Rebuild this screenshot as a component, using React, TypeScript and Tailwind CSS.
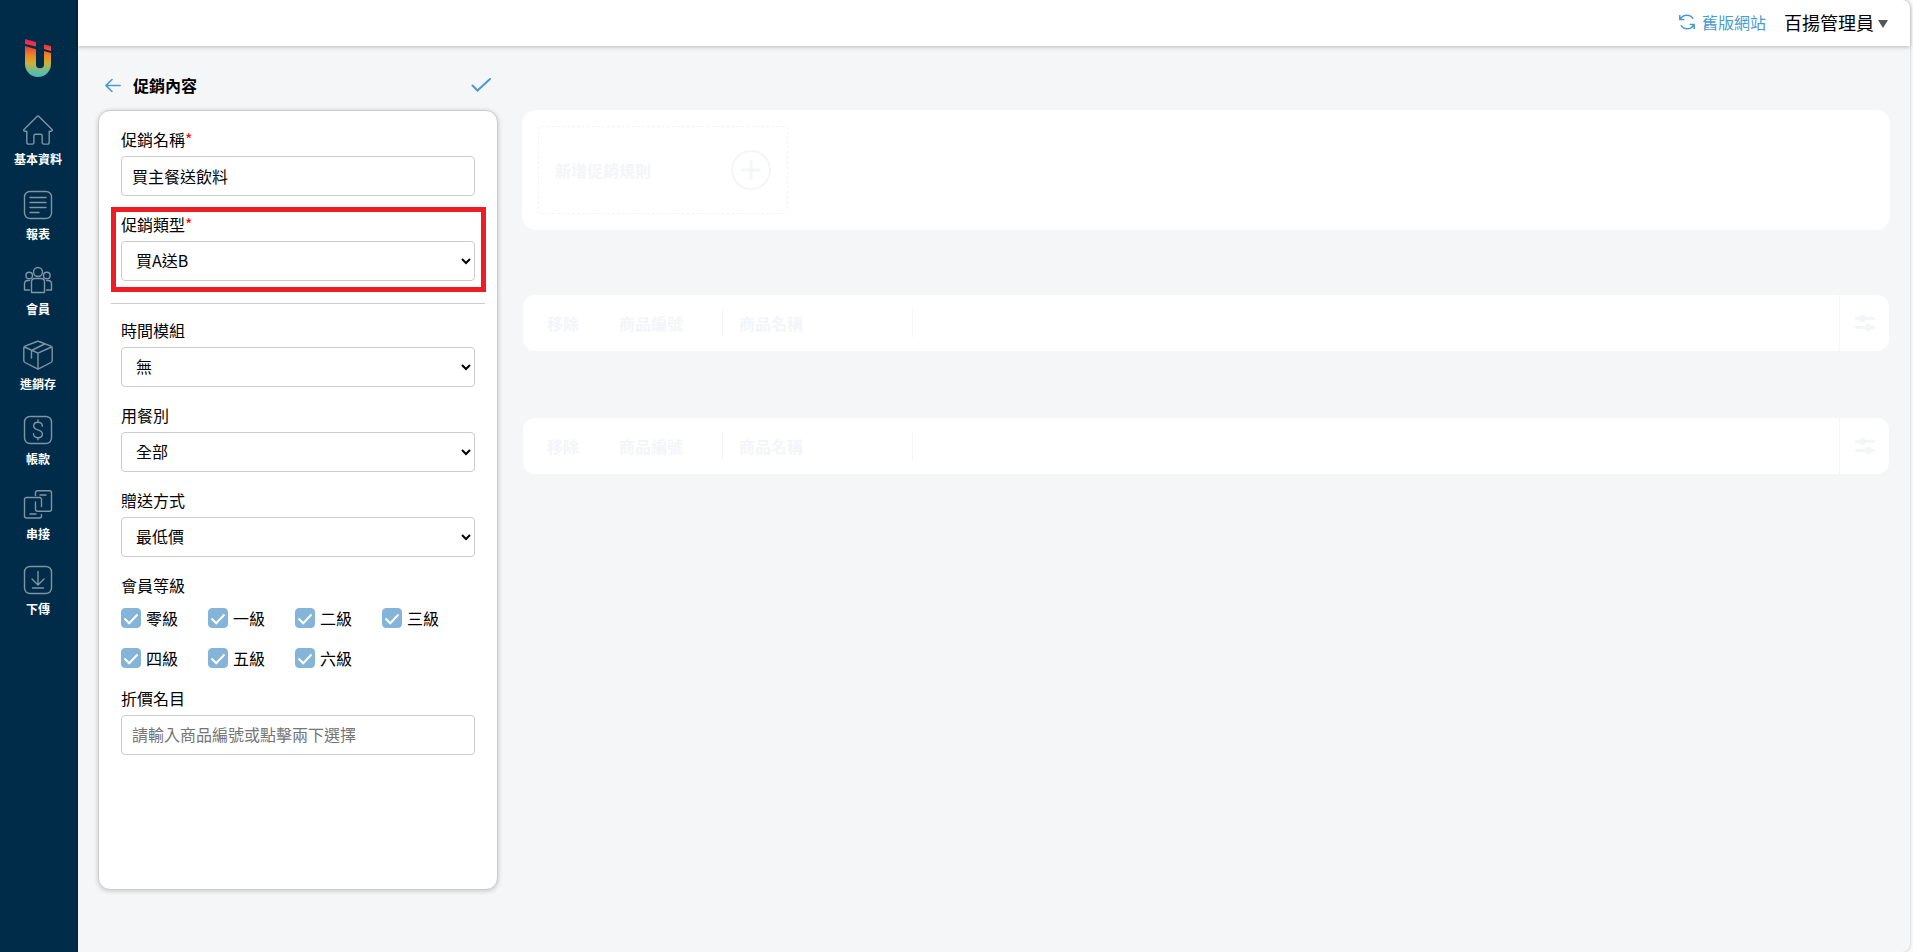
import type { ReactNode } from 'react';

type NavItem = {
  label: string;
  icon: ReactNode;
};

type SelectFieldProps = {
  id: string;
  label: string;
  options: string[];
  required?: boolean;
  highlighted?: boolean;
};

const navItems: NavItem[] = [
  {
    label: '基本資料',
    icon: (
      <path d="M16.2 1.7 29 14.5c.6.6.3 1.8-.7 1.8h-2.1v10.9c0 1.1-.8 1.9-1.9 1.9h-3.4c-1 0-1.7-.7-1.7-1.7v-6.5c0-1-.7-1.7-1.7-1.7h-4.9c-1 0-1.7.7-1.7 1.7v6.5c0 1-.7 1.7-1.7 1.7H5.7c-1.1 0-1.9-.8-1.9-1.9V16.3H1.7c-1 0-1.3-1.2-.7-1.8L13.8 1.7c.7-.7 1.7-.7 2.4 0z" />
    ),
  },
  {
    label: '報表',
    icon: (
      <>
        <rect x="1.5" y="1.5" width="27" height="27" rx="5.5" />
        <path d="M7 7.5h16M7 12.5h16M7 17.5h16M7 22.5h9" />
      </>
    ),
  },
  {
    label: '會員',
    icon: (
      <>
        <circle cx="15" cy="7" r="4.5" />
        <circle cx="6.2" cy="10.5" r="3.3" />
        <circle cx="23.8" cy="10.5" r="3.3" />
        <path d="M8.5 27.5V17c0-2 1.5-3.5 3.5-3.5h6c2 0 3.5 1.5 3.5 3.5v10.5z" />
        <path d="M6.5 15.5H5c-2 0-3.5 1.5-3.5 3.5v6h5M23.5 15.5H25c2 0 3.5 1.5 3.5 3.5v6h-5" />
      </>
    ),
  },
  {
    label: '進銷存',
    icon: (
      <>
        <path d="M14 1.5a2.5 2.5 0 0 1 2 0l12 4.7c.8.4 1.2 1 1.2 1.8v12.5c0 .9-.5 1.6-1.2 2L16 28.7c-.6.3-1.4.3-2 0L2 22.5c-.8-.4-1.2-1.1-1.2-2V8c0-.8.4-1.4 1.2-1.8z" />
        <path d="m1.5 7 13.5 6.2L28.5 7M15 13.2V29M8.5 18v-7.5L21.5 4" />
      </>
    ),
  },
  {
    label: '帳款',
    icon: (
      <>
        <rect x="1.5" y="1.5" width="27" height="27" rx="5.5" />
        <path d="M19.3 11.3c0-2.3-1.8-4-4.3-4s-4.3 1.5-4.3 3.6c0 2.3 1.6 3.1 4.3 4s4.4 1.8 4.4 4.2c0 2.2-1.8 3.7-4.4 3.7s-4.5-1.6-4.5-4M15 5v2.3M15 22.8v2" />
      </>
    ),
  },
  {
    label: '串接',
    icon: (
      <>
        <path d="M12.5 5.5V2.7c0-1.2.8-2 2-2h12c1.2 0 2 .8 2 2v16.5c0 1.2-.8 2-2 2h-12c-1.2 0-2-.8-2-2V12" />
        <path d="M18.5 16.5v-7c0-1.2-.8-2-2-2h-13c-1.2 0-2 .8-2 2V26c0 1.2.8 2 2 2h13c1.2 0 2-.8 2-2v-1.5M17 5h6M7 24h6" />
      </>
    ),
  },
  {
    label: '下傳',
    icon: (
      <>
        <rect x="1.5" y="1.5" width="27" height="27" rx="5.5" />
        <path d="M15 6.5V20M9 14l6 6 6-6M9.500 23h11" />
      </>
    ),
  },
];

const levels = ['零級', '一級', '二級', '三級', '四級', '五級', '六級'];

function Logo() {
  return (
    <svg viewBox="0 0 26 38" className="h-[38px] w-[26px]" aria-hidden="true">
      <defs>
        <linearGradient id="logo" x1="0" y1="0" x2="0" y2="1">
          <stop offset="0" stopColor="#ec1c62" />
          <stop offset="0.2" stopColor="#ee3d3a" />
          <stop offset="0.45" stopColor="#f08a24" />
          <stop offset="0.65" stopColor="#c9b23e" />
          <stop offset="0.85" stopColor="#66bd9c" />
          <stop offset="1" stopColor="#4fb8bd" />
        </linearGradient>
      </defs>
      <path
        fill="url(#logo)"
        d="M0 0l11 3v4.500L0 5zM19 5.500l7 1.500v5l-7-2zM0 7l11 3.200v15.300a4 3.800 0 0 0 8 0V12l7 2V25a13 13 0 0 1-26 0z"
      />
    </svg>
  );
}

function Sidebar() {
  return (
    <nav className="flex w-[78px] shrink-0 flex-col items-center bg-[#002b49] pt-[39px] pr-0.5">
      <Logo />
      <ul className="mt-[38px] flex flex-col gap-[15px]">
        {navItems.map((item) => (
          <li key={item.label}>
            <a
              href="#"
              className="flex h-[60px] flex-col items-center gap-1.5 text-xs font-bold whitespace-nowrap text-white"
            >
              <svg
                viewBox="0 0 30 30"
                className="size-[30px] shrink-0 fill-none stroke-[#7f95a4]"
                strokeWidth="1.4"
                strokeLinecap="round"
                strokeLinejoin="round"
                aria-hidden="true"
              >
                {item.icon}
              </svg>
              {item.label}
            </a>
          </li>
        ))}
      </ul>
    </nav>
  );
}

function Header() {
  return (
    <header className="flex h-[46px] shrink-0 items-center justify-end rounded-tr-lg bg-white pr-[22px] pb-0.5 shadow-[0_1px_4px_rgba(0,0,0,0.25)]">
      <a href="#" className="flex items-center gap-[7px] text-[#4a9bcf]">
        <svg
          viewBox="0 0 16 16"
          className="size-4 fill-none stroke-current"
          strokeWidth="1.5"
          aria-hidden="true"
        >
          <path d="M.8 1v4.5h4.5M1.2 5.2C2.8 2.200 5.200 1.200 8 1.200c2.700 0 4.800 1.300 6 3.600M15.200 15v-4.500h-4.500M14.800 10.800C13.200 13.800 10.800 14.800 8 14.800c-2.700 0-4.800-1.300-6-3.600" />
        </svg>
        舊版網站
      </a>
      <button
        type="button"
        className="ml-[18px] flex items-center gap-1 text-lg text-black"
      >
        百揚管理員
        <svg
          viewBox="0 0 10 8"
          className="mt-1 h-2 w-2.5 fill-[#555]"
          aria-hidden="true"
        >
          <path d="M0 0h10L5 8z" />
        </svg>
      </button>
    </header>
  );
}

function FieldLabel({
  id,
  label,
  required,
}: {
  id: string;
  label: string;
  required?: boolean;
}) {
  return (
    <label htmlFor={id} className="mb-[5px] block leading-6">
      {label}
      {required && <span className="text-[#f00]">*</span>}
    </label>
  );
}

function SelectField({
  id,
  label,
  options,
  required,
  highlighted,
}: SelectFieldProps) {
  return (
    <div className="relative">
      <FieldLabel id={id} label={label} required={required} />
      <select
        id={id}
        className="block h-10 w-full rounded border border-[#ccc] bg-white px-2.5 pb-0.5"
      >
        {options.map((option) => (
          <option key={option}>{option}</option>
        ))}
      </select>
      {highlighted && (
        <div className="pointer-events-none absolute -top-[5px] -right-[11px] -bottom-[11px] -left-2.5 border-5 border-[#ee1c25]" />
      )}
    </div>
  );
}

function PromotionForm() {
  return (
    <form className="w-[400px] shrink-0">
      <div className="mb-[13px] flex h-6 items-center px-[7px]">
        <button type="button" aria-label="返回" className="text-[#4a9bcf]">
          <svg
            viewBox="0 0 16 14"
            className="h-3.5 w-4 fill-none stroke-current"
            strokeWidth="1.6"
            strokeLinecap="round"
          >
            <path d="M15.2 7.5H1M7 1.5l-6 6 6 6" />
          </svg>
        </button>
        <h1 className="ml-3 font-bold">促銷內容</h1>
        <button
          type="submit"
          aria-label="儲存"
          className="ml-auto text-[#4a9bcf]"
        >
          <svg
            viewBox="0 0 20 14"
            className="h-3.5 w-5 fill-none stroke-current"
            strokeWidth="2"
            strokeLinecap="round"
          >
            <path d="m1.5 7.5 5 5L19 1" />
          </svg>
        </button>
      </div>

      <div className="min-h-[780px] rounded-xl border border-[#ccc] bg-white px-[22px] pt-4 shadow-[0_1px_5px_rgba(0,0,0,0.2)]">
        <div className="flex flex-col gap-4">
          <div>
            <FieldLabel id="name" label="促銷名稱" required />
            <input
              id="name"
              type="text"
              defaultValue="買主餐送飲料"
              className="block h-10 w-full rounded border border-[#ccc] px-2.5"
            />
          </div>
          <SelectField
            id="type"
            label="促銷類型"
            options={['買A送B']}
            required
            highlighted
          />
        </div>
        <hr className="-mx-2.5 mt-[22px] mb-3.5 border-[#ccc]" />
        <div className="flex flex-col gap-4">
          <SelectField id="time" label="時間模組" options={['無']} />
          <SelectField id="meal" label="用餐別" options={['全部']} />
          <SelectField id="gift" label="贈送方式" options={['最低價']} />
          <fieldset>
            <legend className="mb-[11px] leading-6">會員等級</legend>
            <div className="mb-0.5 grid grid-cols-[repeat(4,87px)] gap-y-5">
              {levels.map((level) => (
                <label
                  key={level}
                  className="flex h-5 items-center gap-[5px] whitespace-nowrap"
                >
                  <span className="relative size-5">
                    <input
                      type="checkbox"
                      defaultChecked
                      className="peer block size-5 appearance-none rounded border border-[#84b4d8] checked:bg-[#84b4d8]"
                    />
                    <svg
                      viewBox="0 0 20 20"
                      className="pointer-events-none absolute inset-0 hidden size-5 fill-none stroke-white peer-checked:block"
                      strokeWidth="2"
                      aria-hidden="true"
                    >
                      <path d="m3.5 10.5 4.7 4.7 8.300-8.700" />
                    </svg>
                  </span>
                  {level}
                </label>
              ))}
            </div>
          </fieldset>
          <div>
            <FieldLabel id="discount" label="折價名目" />
            <input
              id="discount"
              type="text"
              placeholder="請輸入商品編號或點擊兩下選擇"
              className="block h-10 w-full rounded border border-[#ccc] px-2.5 pb-0.5 placeholder:text-[#757575]"
            />
          </div>
        </div>
      </div>
    </form>
  );
}

function ProductTable() {
  return (
    <table className="w-full table-fixed rounded-xl bg-white text-left text-[#f4f5f8]">
      <thead>
        <tr className="h-14">
          <th className="w-[85px] pl-6">移除</th>
          <th className="w-[115px] p-0">
            <div className="h-7 border-r border-[#f4f5f8] pl-[11px] leading-7">
              商品編號
            </div>
          </th>
          <th className="w-[190px] p-0">
            <div className="h-7 border-r border-[#f4f5f8] pl-4 leading-7">
              商品名稱
            </div>
          </th>
          <td />
          <td className="w-[50px] border-l border-[#f4f5f8] pl-[15px]">
            <button type="button" aria-label="欄位設定" className="block">
              <svg
                viewBox="0 0 20 16"
                className="h-4 w-5 fill-white stroke-current"
                strokeWidth="3"
                strokeLinecap="round"
              >
                <path d="M1.5 3.5h17M1.5 12.5h17" />
                <circle cx="7.5" cy="3.5" r="2" />
                <circle cx="13.5" cy="12.5" r="2" />
              </svg>
            </button>
          </td>
        </tr>
      </thead>
    </table>
  );
}

function Rules() {
  return (
    <section className="mt-[37px] min-w-0 flex-1">
      <div className="rounded-[14px] bg-white p-4">
        <button
          type="button"
          className="flex h-[88px] w-[250px] items-center justify-between rounded-sm border border-dashed border-[#f4f5f8] px-4 font-bold text-[#f4f5f8]"
        >
          新增促銷規則
          <svg
            viewBox="0 0 40 40"
            className="size-10 fill-none stroke-current"
            aria-hidden="true"
          >
            <circle cx="20" cy="20" r="19" strokeWidth="2" />
            <path d="M20 10.5v19M10.5 20h19" strokeWidth="3" />
          </svg>
        </button>
      </div>
      <div className="mt-[65px] flex flex-col gap-[67px] px-px">
        <ProductTable />
        <ProductTable />
      </div>
    </section>
  );
}

export default function App() {
  return (
    <div className="flex min-h-screen bg-[#fafafa] pr-[3px] font-['Noto_Sans_CJK_TC',sans-serif] text-base text-black">
      <Sidebar />
      <div className="flex min-w-0 flex-1 flex-col rounded-r-lg bg-[#f4f6f8] shadow-[0_0_3px_rgba(0,0,0,0.25)]">
        <Header />
        <main className="flex gap-6 px-5 pt-[27px]">
          <PromotionForm />
          <Rules />
        </main>
      </div>
    </div>
  );
}
